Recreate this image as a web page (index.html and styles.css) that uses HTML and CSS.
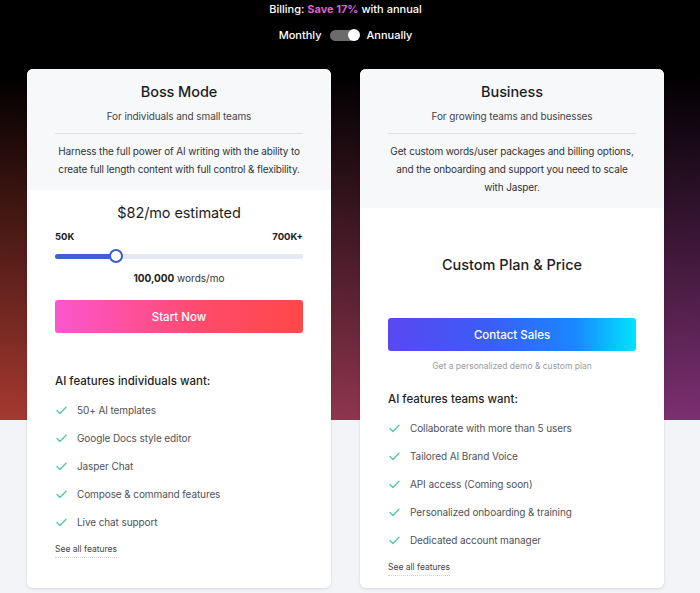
FILE: index.html
```html
<!DOCTYPE html>
<html>
<head>
<meta charset="utf-8">
<link rel="stylesheet" href="styles.css">
</head>
<body>
<div class="page">
  <div class="inner">
    <div class="billing">Billing: <span class="save">Save 17%</span> with annual</div>
    <div class="toggle-row">
      <span>Monthly</span>
      <span class="toggle"><span class="knob"></span></span>
      <span>Annually</span>
    </div>
    <div class="cards">
      <div class="card">
        <div class="card-head">
          <div class="title">Boss Mode</div>
          <div class="subtitle">For individuals and small teams</div>
          <div class="divider"></div>
          <div class="desc">Harness the full power of AI writing with the ability to create full length content with full control &amp; flexibility.</div>
        </div>
        <div class="card-body">
          <div class="price">$82/mo estimated</div>
          <div class="range-labels"><span>50K</span><span>700K+</span></div>
          <div class="slider">
            <div class="track"><div class="fill" style="width:61px"></div></div>
            <div class="thumb"></div>
          </div>
          <div class="words"><b>100,000</b> words/mo</div>
          <div class="btn btn-pink">Start Now</div>
          <div class="feat-title feat-title-left">AI features individuals want:</div>
          <ul class="features">
            <li><svg class="check" viewBox="0 0 11 9"><path d="M1 4.6 L3.9 7.5 L10 1.2"/></svg>50+ AI templates</li>
            <li><svg class="check" viewBox="0 0 11 9"><path d="M1 4.6 L3.9 7.5 L10 1.2"/></svg>Google Docs style editor</li>
            <li><svg class="check" viewBox="0 0 11 9"><path d="M1 4.6 L3.9 7.5 L10 1.2"/></svg>Jasper Chat</li>
            <li><svg class="check" viewBox="0 0 11 9"><path d="M1 4.6 L3.9 7.5 L10 1.2"/></svg>Compose &amp; command features</li>
            <li><svg class="check" viewBox="0 0 11 9"><path d="M1 4.6 L3.9 7.5 L10 1.2"/></svg>Live chat support</li>
          </ul>
          <div class="see-all">See all features</div>
        </div>
      </div>
      <div class="card">
        <div class="card-head">
          <div class="title">Business</div>
          <div class="subtitle">For growing teams and businesses</div>
          <div class="divider"></div>
          <div class="desc">Get custom words/user packages and billing options, and the onboarding and support you need to scale with Jasper.</div>
        </div>
        <div class="card-body">
          <div class="custom">Custom Plan &amp; Price</div>
          <div class="btn btn-blue">Contact Sales</div>
          <div class="demo">Get a personalized demo &amp; custom plan</div>
          <div class="feat-title feat-title-right">AI features teams want:</div>
          <ul class="features">
            <li><svg class="check" viewBox="0 0 11 9"><path d="M1 4.6 L3.9 7.5 L10 1.2"/></svg>Collaborate with more than 5 users</li>
            <li><svg class="check" viewBox="0 0 11 9"><path d="M1 4.6 L3.9 7.5 L10 1.2"/></svg>Tailored AI Brand Voice</li>
            <li><svg class="check" viewBox="0 0 11 9"><path d="M1 4.6 L3.9 7.5 L10 1.2"/></svg>API access (Coming soon)</li>
            <li><svg class="check" viewBox="0 0 11 9"><path d="M1 4.6 L3.9 7.5 L10 1.2"/></svg>Personalized onboarding &amp; training</li>
            <li><svg class="check" viewBox="0 0 11 9"><path d="M1 4.6 L3.9 7.5 L10 1.2"/></svg>Dedicated account manager</li>
          </ul>
          <div class="see-all">See all features</div>
        </div>
      </div>
    </div>
  </div>
</div>
</body>
</html>
```
FILE: styles.css
```css
* { box-sizing: border-box; }
html, body { margin: 0; padding: 0; }
body {
  font-family: Inter, "Liberation Sans", sans-serif;
  background: #f3f4f8;
  width: 700px;
  height: 593px;
  overflow: hidden;
}
.page {
  height: 593px;
  padding-top: 1px;
  background:
    linear-gradient(to bottom, #000 0%, #000 18%, rgba(0,0,0,0.55) 55%, rgba(0,0,0,0) 100%) 0 0 / 100% 420px no-repeat,
    linear-gradient(to right, #a6392f 0%, #8e3550 50%, #7a2f72 100%) 0 0 / 100% 420px no-repeat,
    #f3f4f8;
}
.inner {
  width: 691px;
}
.billing {
  text-align: center;
  color: #fff;
  font-size: 11px;
  line-height: 16px;
  font-weight: 500;
}
.save { color: #dd5fc9; font-weight: 700; }
.toggle-row {
  margin-top: 10px;
  display: flex;
  justify-content: center;
  align-items: center;
  gap: 8px;
  color: #fff;
  font-size: 11px;
  line-height: 16px;
  font-weight: 500;
}
.toggle {
  width: 29px;
  height: 11px;
  border-radius: 6px;
  background: #6b6b6b;
  display: flex;
  justify-content: flex-end;
  align-items: center;
}
.knob {
  width: 12px;
  height: 12px;
  border-radius: 50%;
  background: #fff;
  margin-right: -1px;
}
.cards {
  margin-top: 26px;
  display: grid;
  justify-content: center;
  grid-template-columns: 304px 304px;
  column-gap: 29px;
}
.card {
  background: #fff;
  border-radius: 6px;
  overflow: hidden;
  box-shadow: 0 1px 3px rgba(0,0,0,0.12);
  display: flex;
  flex-direction: column;
  height: 519px;
}
.card-head {
  background: #f7f8fa;
  padding: 13px 28px 12px;
  text-align: center;
}
.title {
  font-size: 14.5px;
  line-height: 20px;
  font-weight: 500;
  color: #1d1d1f;
  letter-spacing: -0.1px;
}
.subtitle {
  margin-top: 6px;
  font-size: 10px;
  line-height: 16px;
  color: #444;
  letter-spacing: -0.1px;
}
.divider {
  margin-top: 9px;
  height: 1px;
  background: #dfe1e5;
}
.desc {
  margin-top: 8px;
  font-size: 10px;
  line-height: 18px;
  color: #333;
  letter-spacing: -0.15px;
}
.card-body {
  padding: 13px 28px 18px;
  flex: 1;
}
.price {
  text-align: center;
  font-size: 14.5px;
  line-height: 20px;
  color: #1d1d1f;
  letter-spacing: -0.1px;
}
.range-labels {
  margin-top: 7px;
  display: flex;
  justify-content: space-between;
  font-size: 9.5px;
  line-height: 14px;
  font-weight: 700;
  color: #222;
}
.slider {
  margin-top: 5px;
  height: 14px;
  display: flex;
  align-items: center;
}
.track {
  flex: 1;
  height: 5px;
  border-radius: 3px;
  background: #e4e9f5;
  overflow: hidden;
}
.fill {
  height: 100%;
  background: #3d60d3;
}
.thumb {
  position: absolute;
  width: 14px;
  height: 14px;
  border-radius: 50%;
  background: #fff;
  border: 2px solid #3c5cc4;
  margin-left: 54px;
}
.words {
  margin-top: 7px;
  text-align: center;
  font-size: 10px;
  line-height: 16px;
  color: #333;
}
.words b { font-weight: 700; color: #222; }
.btn {
  height: 33px;
  border-radius: 3px;
  color: #fff;
  font-size: 11.5px;
  font-weight: 500;
  display: flex;
  align-items: center;
  justify-content: center;
}
.btn-pink {
  margin-top: 14px;
  background: linear-gradient(90deg, #fb56cf 0%, #ff4a6a 60%, #ff4848 100%);
}
.btn-blue {
  margin-top: 43px;
  background: linear-gradient(90deg, #5a47f2 0%, #3d5cf7 40%, #1a86ff 75%, #00e4ff 100%);
}
.custom {
  padding-top: 34px;
  text-align: center;
  font-size: 14.5px;
  line-height: 20px;
  font-weight: 500;
  color: #1d1d1f;
}
.demo {
  margin-top: 9px;
  text-align: center;
  font-size: 8.5px;
  line-height: 12px;
  color: #9a9ca2;
}
.feat-title {
  font-size: 11.5px;
  line-height: 16px;
  font-weight: 500;
  color: #1f1f22;
}
.feat-title-left { margin-top: 40px; }
.feat-title-right { margin-top: 19px; }
.features {
  list-style: none;
  margin: 7px 0 0;
  padding: 0;
}
.features li {
  height: 28px;
  display: flex;
  align-items: center;
  font-size: 10px;
  color: #505258;
  letter-spacing: -0.1px;
}
.check {
  width: 11px;
  height: 9px;
  margin-left: 1px;
  margin-right: 10px;
  fill: none;
  stroke: #5cc8a2;
  stroke-width: 1.4;
  stroke-linecap: round;
  stroke-linejoin: round;
}
.see-all {
  margin-top: 0;
  display: inline-block;
  font-size: 8.5px;
  line-height: 12px;
  color: #444;
  padding-bottom: 2px;
  border-bottom: 1px dotted #cfd2d8;
}
```
